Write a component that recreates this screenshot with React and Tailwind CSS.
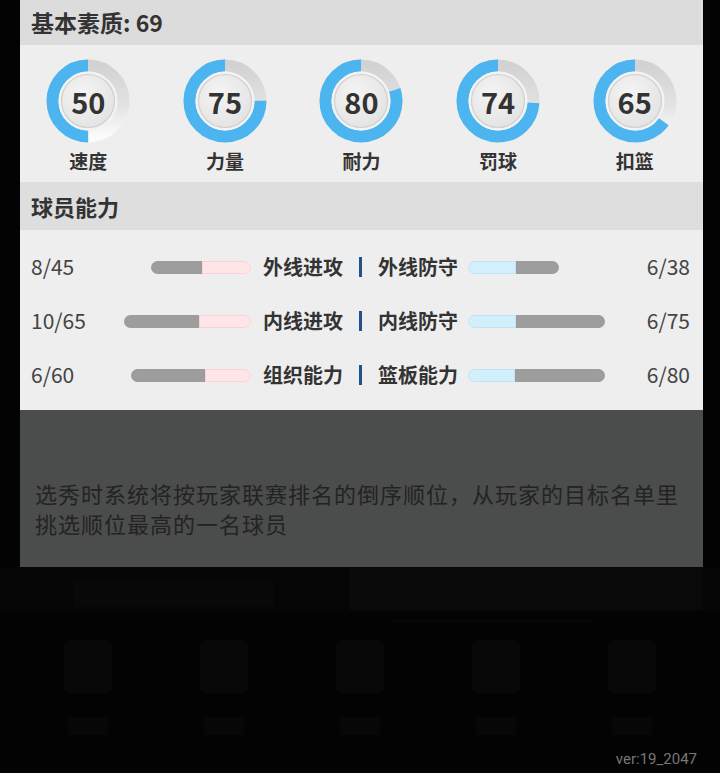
import React from "react";

const basics = [
  { label: "速度", value: 50 },
  { label: "力量", value: 75 },
  { label: "耐力", value: 80 },
  { label: "罚球", value: 74 },
  { label: "扣篮", value: 65 },
];

// widths of the bars are read off the screenshot
const abilities = [
  {
    left: { label: "外线进攻", value: "8/45", total: 100, fill: 49 },
    right: { label: "外线防守", value: "6/38", total: 91, fill: 48 },
  },
  {
    left: { label: "内线进攻", value: "10/65", total: 127, fill: 52 },
    right: { label: "内线防守", value: "6/75", total: 137, fill: 48 },
  },
  {
    left: { label: "组织能力", value: "6/60", total: 120, fill: 46 },
    right: { label: "篮板能力", value: "6/80", total: 137, fill: 47 },
  },
];

const Ring = ({ value, label }) => {
  const r = 35.5;
  const c = 2 * Math.PI * r;
  return (
    <div className="flex flex-col items-center">
      <div className="relative h-[84px] w-[84px]">
        <svg width="84" height="84" viewBox="0 0 84 84">
          <defs>
            <linearGradient id="ringTrack" x1="0" y1="0" x2="0" y2="1">
              <stop offset="0" stopColor="#d2d2d2" />
              <stop offset="0.55" stopColor="#e2e2e2" />
              <stop offset="1" stopColor="#fbfbfb" />
            </linearGradient>
            <radialGradient id="ringDisc" cx="0.4" cy="0.35" r="0.7">
              <stop offset="0" stopColor="#f4f4f4" />
              <stop offset="1" stopColor="#e3e3e3" />
            </radialGradient>
          </defs>
          <circle cx="42" cy="42" r={r} fill="none" stroke="url(#ringTrack)" strokeWidth="12" />
          <circle
            cx="42"
            cy="42"
            r={r}
            fill="none"
            stroke="#4cb5ef"
            strokeWidth="12"
            strokeDasharray={`${(c * value) / 100} ${c}`}
            transform="translate(84 0) scale(-1 1) rotate(-90 42 42)"
          />
          <circle cx="42" cy="42" r="29.5" fill="#f3f3f3" />
          <circle cx="42" cy="42" r="26.5" fill="url(#ringDisc)" stroke="#d0d0d0" strokeWidth="1.2" />
        </svg>
        <div className="absolute inset-0 flex items-center justify-center text-[29px] font-bold leading-none text-[#333]">
          {value}
        </div>
      </div>
      <div className="mt-[7px] text-[19px] leading-[22px] font-bold text-[#333]">{label}</div>
    </div>
  );
};

const LeftSide = ({ item }) => (
  <div className="flex items-center">
    <span className="text-[21px] text-[#444]">{item.value}</span>
    <div className="ml-auto flex h-[13px] overflow-hidden rounded-full" style={{ width: item.total }}>
      <div className="flex-1 bg-[#9d9d9d]" />
      <div className="rounded-r-full border border-[#f7d3d8] bg-[#ffe4e8]" style={{ width: item.fill }} />
    </div>
    <span className="ml-[12px] text-[20px] font-bold text-[#333]">{item.label}</span>
  </div>
);

const RightSide = ({ item }) => (
  <div className="flex items-center">
    <span className="mr-[10px] text-[20px] font-bold text-[#333]">{item.label}</span>
    <div className="flex h-[13px] overflow-hidden rounded-full" style={{ width: item.total }}>
      <div className="rounded-l-full border border-[#bfe3f5] bg-[#d2effc]" style={{ width: item.fill }} />
      <div className="flex-1 bg-[#9d9d9d]" />
    </div>
    <span className="ml-auto text-[21px] text-[#444]">{item.value}</span>
  </div>
);

export default function App() {
  return (
    <div className="h-[773px] w-[720px] overflow-hidden bg-[#030303] font-['Noto_Sans_CJK_SC','Noto_Sans',sans-serif]">
      <div className="ml-[20px] w-[683px]">
        {/* basic attributes */}
        <div className="flex h-[45px] items-center bg-[#dcdcdc] px-[11px] text-[23px] font-bold text-[#333]">
          基本素质: 69
        </div>
        <div className="grid grid-cols-5 bg-[#eeeeee] pt-[14px] pb-[10px]">
          {basics.map((b) => (
            <Ring key={b.label} value={b.value} label={b.label} />
          ))}
        </div>

        {/* player abilities */}
        <div className="flex h-[48px] items-center bg-[#dedede] px-[11px] text-[22px] font-bold text-[#333]">
          球员能力
        </div>
        <div className="bg-[#eeeeee] pt-[10px] pb-[8px] pl-[11px] pr-[13px]">
          {abilities.map((row, i) => (
            <div key={i} className="grid h-[54px] grid-cols-[1fr_auto_1fr] items-center">
              <LeftSide item={row.left} />
              <div className="mx-[16px] h-[20px] w-[3px] bg-[#22528e]" />
              <RightSide item={row.right} />
            </div>
          ))}
        </div>

        {/* tip */}
        <div className="h-[157px] bg-[#4b4c4c] px-[15px] pt-[68px]">
          <p className="text-[22px] leading-[30px] tracking-[1px] text-[#232323]">
            选秀时系统将按玩家联赛排名的倒序顺位，从玩家的目标名单里挑选顺位最高的一名球员
          </p>
        </div>
      </div>

      {/* dimmed page behind */}
      <div className="flex h-[206px] flex-col">
        <div className="flex h-[45px] bg-[#050505]">
          <div className="ml-[73px] mt-[13px] h-[27px] w-[200px] bg-[#080808]" />
          <div className="ml-auto mr-[18px] h-[43px] w-[353px] bg-[#090909]" />
        </div>
        <div className="ml-[390px] mt-[8px] h-[2px] w-[200px] bg-[#080808]" />
        <div className="mt-[18px] grid grid-cols-5 px-[20px]">
          {basics.map((b) => (
            <div key={b.label} className="flex flex-col items-center">
              <div className="h-[53px] w-[48px] rounded-[6px] bg-[#080808]" />
              <div className="mt-[24px] h-[18px] w-[40px] bg-[#070707]" />
            </div>
          ))}
        </div>
        <div className="mt-auto mb-[5px] pr-[23px] text-right font-['Roboto',sans-serif] text-[15px] leading-[18px] text-[#777]">
          ver:19_2047
        </div>
      </div>
    </div>
  );
}
